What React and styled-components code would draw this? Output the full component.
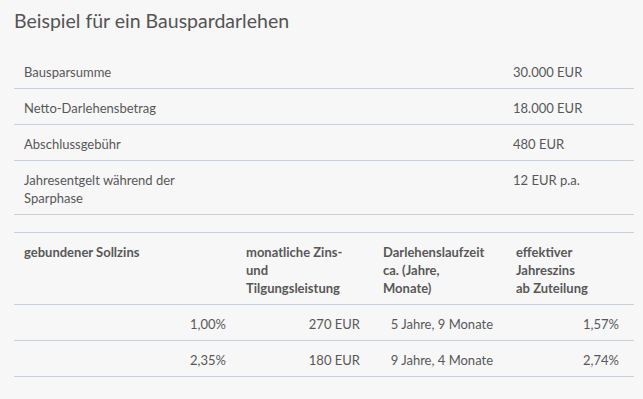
import React from 'react'
import styled, { createGlobalStyle } from 'styled-components'

const Global = createGlobalStyle`
  html, body {
    margin: 0;
    background: #f7f7f7;
  }
  body {
    font-family: Lato, "Open Sans", sans-serif;
    font-size: 13px;
    color: #575757;
  }
`

const Page = styled.div`
  padding: 9px 9px 20px 14px;
`
const Title = styled.h2`
  margin: 0 0 20px;
  font-size: 19.5px;
  line-height: 24px;
  font-weight: 400;
  color: #545454;
`
const Table = styled.div`
  display: grid;
  grid-template-columns: ${(p) => p.cols};
  width: 620px;
  border-top: ${(p) => (p.bordered ? '1px solid #cbd1d9' : 'none')};
  margin-top: ${(p) => p.gap || 0}px;
`
const Cell = styled.div`
  padding: 10px ${(p) => p.pr || 10}px 7px 10px;
  line-height: 18px;
  border-bottom: 1px solid #cbd1d9;
  text-align: ${(p) => (p.right ? 'right' : 'left')};
  font-weight: ${(p) => (p.head ? 700 : 400)};
  white-space: nowrap;
`

const facts = [
  ['Bausparsumme', '30.000 EUR'],
  ['Netto-Darlehensbetrag', '18.000 EUR'],
  ['Abschlussgebühr', '480 EUR'],
  [<>Jahresentgelt während der<br />Sparphase</>, '12 EUR p.a.'],
]

const rates = [
  ['1,00%', '270 EUR', '5 Jahre, 9 Monate', '1,57%'],
  ['2,35%', '180 EUR', '9 Jahre, 4 Monate', '2,74%'],
]

const pads = [10, 13, 13, 15]

export default function App() {
  return (
    <Page>
      <Global />
      <Title>Beispiel für ein Bauspardarlehen</Title>
      <Table cols="489px 1fr">
        {facts.map(([label, value], i) => (
          <React.Fragment key={i}>
            <Cell>{label}</Cell>
            <Cell>{value}</Cell>
          </React.Fragment>
        ))}
      </Table>
      <Table cols="222px 137px 133px 1fr" bordered gap={17}>
        <Cell head>gebundener Sollzins</Cell>
        <Cell head>monatliche Zins-<br />und<br />Tilgungsleistung</Cell>
        <Cell head>Darlehenslaufzeit<br />ca. (Jahre,<br />Monate)</Cell>
        <Cell head>effektiver<br />Jahreszins<br />ab Zuteilung</Cell>
        {rates.map((row, i) => row.map((v, j) => (
          <Cell key={`${i}-${j}`} right pr={pads[j]}>{v}</Cell>
        )))}
      </Table>
    </Page>
  )
}
